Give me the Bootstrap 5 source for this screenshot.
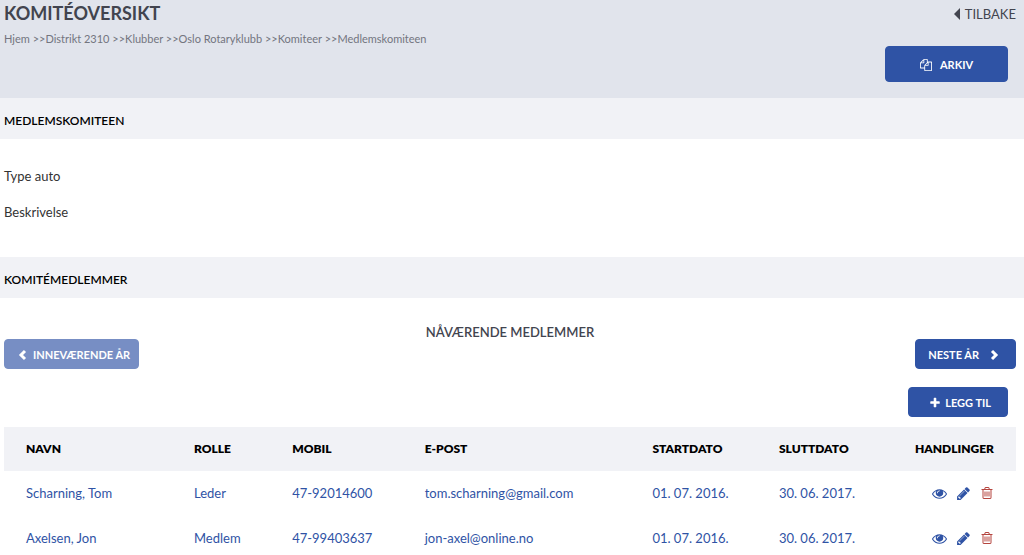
<!DOCTYPE html>
<html lang="no">
<head>
<meta charset="utf-8">
<meta name="viewport" content="width=device-width, initial-scale=1">
<title>Komitéoversikt</title>
<link href="https://cdn.jsdelivr.net/npm/bootstrap@5.3.0/dist/css/bootstrap.min.css" rel="stylesheet">
<style>
body { font-family: Lato, "Open Sans", sans-serif; font-size: 13px; line-height: 20px; color: #333; overflow-x: hidden; }
a { text-decoration: none; color: inherit; }
svg { fill: currentColor; flex: none; }
.page-head { background: #e1e4ec; color: #42444f; min-height: 98px; padding: 0 8px 0 4px; }
.page-title { font-size: 18px; line-height: 26px; font-weight: 700; margin: 0; }
.trail { font-size: 11px; line-height: 16px; color: #73757f; margin-top: 5px; }
.section-bar { background: #f1f2f6; color: #000; font-size: 12px; line-height: 20px; font-weight: 600; margin: 0; padding: 13px 4px 8px; }
.details { padding: 27px 4px 35px; }
.details p { margin: 0 0 16px; }
.btn-club { --bs-btn-color: #fff; --bs-btn-bg: #2f53a5; --bs-btn-border-color: #2f53a5; --bs-btn-hover-color: #fff; --bs-btn-hover-bg: #26468e; --bs-btn-hover-border-color: #26468e;
  --bs-btn-disabled-color: #fff; --bs-btn-disabled-bg: #2f53a5; --bs-btn-disabled-border-color: #2f53a5;
  --bs-btn-font-size: 11px; --bs-btn-font-weight: 700; --bs-btn-padding-x: 8px; --bs-btn-border-radius: 4px; line-height: 16px; padding-top: 7px; padding-bottom: 5px; }
.btn-archive { width: 123px; padding-top: 10px; padding-bottom: 8px; }
.btn-next { --bs-btn-padding-x: 12px; }
.btn-add { width: 100px; }
.members { padding: 27px 8px 0 4px; }
.members-title { font-size: 13px; line-height: 14px; font-weight: 600; color: #42444f; margin: 0; }
.member-actions { margin: 18px 8px 10px 0; }
.member-table { --bs-table-bg: transparent; table-layout: fixed; margin: 0; }
.member-table th, .member-table td { border: 0; padding: 12px 0 12px 22px; white-space: nowrap; color: #2f53a5; }
.member-table td { padding-bottom: 13px; }
.member-table thead th { background: #f1f2f6; color: #000; font-size: 12px; font-weight: 800; }
.member-table th:last-child, .member-table td:last-child { padding-right: 22px; padding-left: 0; text-align: right; }
.row-tools { height: 20px; gap: 9px; }
.c-name { width: 16.6%; } .c-role { width: 9.7%; } .c-phone { width: 13.1%; } .c-mail { width: 22.5%; } .c-date { width: 12.5%; }
.remove { color: #b5453f; }
</style>
</head>
<body>
<svg class="d-none">
  <symbol id="i-copy" viewBox="0 0 1792 1792"><path d="M1696 384q40 0 68 28t28 68v1216q0 40-28 68t-68 28h-960q-40 0-68-28t-28-68v-288h-544q-40 0-68-28t-28-68v-672q0-40 20-88t48-76l408-408q28-28 76-48t88-20h416q40 0 68 28t28 68v328q68-40 128-40h416zm-544 213l-299 299h299v-299zm-640-384l-299 299h299v-299zm196 647l316-316v-416h-384v416q0 40-28 68t-68 28h-416v640h512v-256q0-40 20-88t48-76zm956 804v-1152h-384v416q0 40-28 68t-68 28h-416v640h896z"/></symbol>
  <symbol id="i-eye" viewBox="0 0 1792 1792"><path d="M1664 960q-152-236-381-353 61 104 61 225 0 185-131.5 316.5t-316.5 131.5-316.5-131.5-131.5-316.5q0-121 61-225-229 117-381 353 133 205 333.5 326.5t434.5 121.5 434.5-121.5 333.5-326.5zm-720-384q0-20-14-34t-34-14q-125 0-214.5 89.5t-89.5 214.5q0 20 14 34t34 14 34-14 14-34q0-86 61-147t147-61q20 0 34-14t14-34zm848 384q0 34-20 69-140 230-376.5 368.5t-499.5 138.5-499.5-139-376.5-368q-20-35-20-69t20-69q140-229 376.5-368t499.5-139 499.5 139 376.5 368q20 35 20 69z"/></symbol>
  <symbol id="i-pencil" viewBox="0 0 1792 1792"><path d="M491 1536l91-91-235-235-91 91v107h128v128h107zm523-928q0-22-22-22-10 0-17 7l-542 542q-7 7-7 17 0 22 22 22 10 0 17-7l542-542q7-7 7-17zm-54-192l416 416-832 832h-416v-416zm683 96q0 53-37 90l-166 166-416-416 166-165q36-38 90-38 53 0 91 38l235 234q37 39 37 91z"/></symbol>
  <symbol id="i-trash" viewBox="0 0 1792 1792"><path d="M704 736v576q0 14-9 23t-23 9h-64q-14 0-23-9t-9-23v-576q0-14 9-23t23-9h64q14 0 23 9t9 23zm256 0v576q0 14-9 23t-23 9h-64q-14 0-23-9t-9-23v-576q0-14 9-23t23-9h64q14 0 23 9t9 23zm256 0v576q0 14-9 23t-23 9h-64q-14 0-23-9t-9-23v-576q0-14 9-23t23-9h64q14 0 23 9t9 23zm128 724v-948h-896v948q0 22 7 40.5t14.5 27 10.5 8.5h832q3 0 10.5-8.5t14.5-27 7-40.5zm-672-1076h448l-48-117q-7-9-17-11h-317q-10 2-17 11zm928 32v64q0 14-9 23t-23 9h-96v948q0 83-47 143.5t-113 60.5h-832q-66 0-113-58.5t-47-141.5v-952h-96q-14 0-23-9t-9-23v-64q0-14 9-23t23-9h309l70-167q15-37 54-63t79-26h320q40 0 79 26t54 63l70 167h309q14 0 23 9t9 23z"/></symbol>
  <symbol id="i-plus" viewBox="0 0 1792 1792"><path d="M1600 736v192q0 40-28 68t-68 28h-416v416q0 40-28 68t-68 28h-192q-40 0-68-28t-28-68v-416h-416q-40 0-68-28t-28-68v-192q0-40 28-68t68-28h416v-416q0-40 28-68t68-28h192q40 0 68 28t28 68v416h416q40 0 68 28t28 68z"/></symbol>
</svg>

<header class="page-head d-flex justify-content-between">
  <div>
    <h1 class="page-title">KOMITÉOVERSIKT</h1>
    <nav class="trail" aria-label="Brødsmuler"><a href="#">Hjem</a> &gt;&gt;<a href="#">Distrikt 2310</a> &gt;&gt;<a href="#">Klubber</a> &gt;&gt;<a href="#">Oslo Rotaryklubb</a> &gt;&gt;<a href="#">Komiteer</a> &gt;&gt;<a href="#">Medlemskomiteen</a></nav>
  </div>
  <div class="d-flex flex-column align-items-end justify-content-between pt-1 pb-3">
    <a href="#" class="d-flex align-items-center gap-1"><svg width="8" height="12" viewBox="0 0 8 12"><path d="M7 0v12L1 6z"/></svg>TILBAKE</a>
    <button type="button" class="btn btn-club btn-archive d-flex align-items-center justify-content-center gap-2 me-2"><svg width="12" height="12"><use href="#i-copy"/></svg>ARKIV</button>
  </div>
</header>

<main>
  <h2 class="section-bar">MEDLEMSKOMITEEN</h2>
  <div class="details">
    <p>Type auto</p>
    <p class="mb-0">Beskrivelse</p>
  </div>

  <h2 class="section-bar">KOMITÉMEDLEMMER</h2>
  <div class="members">
    <h3 class="members-title text-center">NÅVÆRENDE MEDLEMMER</h3>
    <div class="d-flex justify-content-between">
      <button type="button" class="btn btn-club d-flex align-items-center gap-1" disabled><svg width="16" height="12" viewBox="-5 0 16 12"><path d="M7 2L3 6l4 4" fill="none" stroke="currentColor" stroke-width="3"/></svg>INNEVÆRENDE ÅR</button>
      <button type="button" class="btn btn-club btn-next d-flex align-items-center gap-1">NESTE ÅR<svg width="20" height="12" viewBox="-8 0 20 12"><path d="M1 2l4 4-4 4" fill="none" stroke="currentColor" stroke-width="3"/></svg></button>
    </div>
    <div class="member-actions d-flex justify-content-end">
      <button type="button" class="btn btn-club btn-add d-flex align-items-center justify-content-end gap-1 pe-3"><svg width="12" height="12"><use href="#i-plus"/></svg>LEGG TIL</button>
    </div>
    <table class="table member-table">
      <colgroup><col class="c-name"><col class="c-role"><col class="c-phone"><col class="c-mail"><col class="c-date"><col class="c-date"><col></colgroup>
      <thead>
        <tr><th>NAVN</th><th>ROLLE</th><th>MOBIL</th><th>E-POST</th><th>STARTDATO</th><th>SLUTTDATO</th><th>HANDLINGER</th></tr>
      </thead>
      <tbody>
        <tr><td><a href="#">Scharning, Tom</a></td><td>Leder</td><td>47-92014600</td><td><a href="#">tom.scharning@gmail.com</a></td><td>01. 07. 2016.</td><td>30. 06. 2017.</td>
          <td><div class="row-tools d-flex justify-content-end align-items-center"><a href="#" class="d-flex" aria-label="Vis"><svg width="15" height="15"><use href="#i-eye"/></svg></a><a href="#" class="d-flex" aria-label="Rediger"><svg width="15" height="15"><use href="#i-pencil"/></svg></a><a href="#" class="d-flex remove" aria-label="Slett"><svg width="14" height="14"><use href="#i-trash"/></svg></a></div></td></tr>
        <tr><td><a href="#">Axelsen, Jon</a></td><td>Medlem</td><td>47-99403637</td><td><a href="#">jon-axel@online.no</a></td><td>01. 07. 2016.</td><td>30. 06. 2017.</td>
          <td><div class="row-tools d-flex justify-content-end align-items-center"><a href="#" class="d-flex" aria-label="Vis"><svg width="15" height="15"><use href="#i-eye"/></svg></a><a href="#" class="d-flex" aria-label="Rediger"><svg width="15" height="15"><use href="#i-pencil"/></svg></a><a href="#" class="d-flex remove" aria-label="Slett"><svg width="14" height="14"><use href="#i-trash"/></svg></a></div></td></tr>
      </tbody>
    </table>
  </div>
</main>
<script src="https://cdn.jsdelivr.net/npm/bootstrap@5.3.0/dist/js/bootstrap.bundle.min.js"></script>
</body>
</html>
